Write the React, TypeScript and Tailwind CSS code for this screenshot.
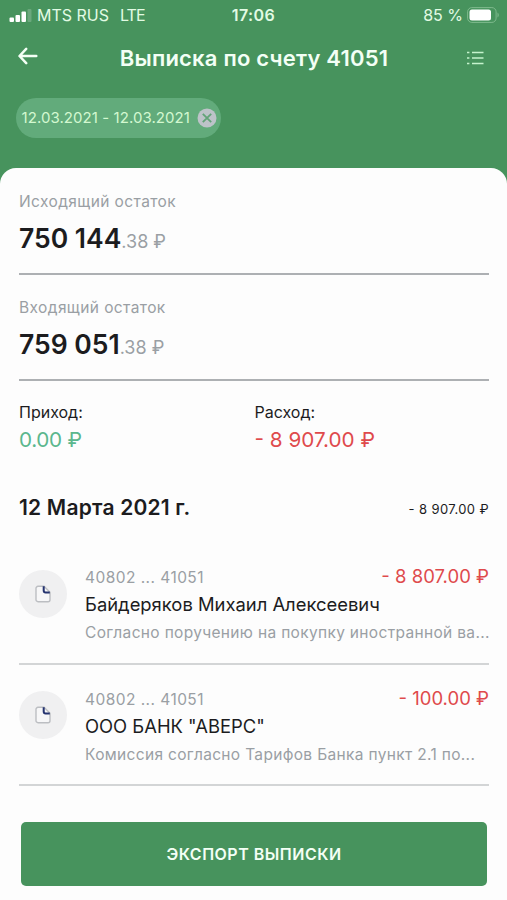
import React from "react";

interface BalanceProps {
  label: string;
  whole: string;
  cents: string;
}

interface OperationProps {
  account: string;
  amount: string;
  name: string;
  description: string;
}

const operations: OperationProps[] = [
  {
    account: "40802 ... 41051",
    amount: "- 8 807.00 ₽",
    name: "Байдеряков Михаил Алексеевич",
    description: "Согласно поручению на покупку иностранной ва...",
  },
  {
    account: "40802 ... 41051",
    amount: "- 100.00 ₽",
    name: 'ООО БАНК "АВЕРС"',
    description: "Комиссия согласно Тарифов Банка пункт 2.1 по...",
  },
];

const App: React.FC = () => {
  return (
    <div className="flex h-[900px] w-full flex-col overflow-hidden bg-[#47935d] font-['Inter','Liberation_Sans',sans-serif] text-[#1c1c1e]">
      <StatusBar />
      <header className="flex h-14 items-center justify-between pr-[23px] pl-[18px] text-[#f3fff5]">
        <svg width="20" height="18" viewBox="0 0 20 18" fill="none" stroke="currentColor" strokeWidth="2.5" strokeLinecap="round" strokeLinejoin="round" className="mb-1">
          <path d="M18.3 9H2M8.2 1.8 1.5 9l6.7 7.2" />
        </svg>
        <h1 className="ml-1 text-[22px] leading-7 font-semibold tracking-[0.2px]">
          Выписка по счету 41051
        </h1>
        <svg width="18" height="14" viewBox="0 0 18 14" stroke="#c5f3cd" strokeWidth="1.6">
          <path d="M6 1.5h11.5M6 7h11.5M6 12.5h11.5M1 1.5h2.4M1 7h2.4M1 12.5h2.4" />
        </svg>
      </header>
      <div className="h-[82px] px-4 pt-3">
        <div className="flex h-10 w-[205px] items-center justify-between rounded-full bg-[#62ab7b] pr-1 pl-[5.5px]">
          <span className="pt-px text-[15px] tracking-[0.07px] whitespace-nowrap text-[#d3f8d0]">
            12.03.2021 - 12.03.2021
          </span>
          <svg width="20" height="20" viewBox="0 0 20 20">
            <circle cx="10" cy="10" r="9.5" fill="#bdc3c9" />
            <path d="m5.8 5.8 8.4 8.4m0-8.4-8.4 8.4" stroke="#62a378" strokeWidth="1.8" />
          </svg>
        </div>
      </div>
      <main className="flex-1 rounded-t-2xl bg-[#fdfdfd] pt-px pr-[18px] pl-[19px]">
        <Balance label="Исходящий остаток" whole="750 144" cents=".38 ₽" />
        <Balance label="Входящий остаток" whole="759 051" cents=".38 ₽" />
        <div className="grid h-[89px] grid-cols-2 gap-x-px pt-[21px]">
          <Total label="Приход:" value="0.00 ₽" className="tracking-[-0.3px] text-[#5bb78d]" />
          <Total label="Расход:" value="- 8 907.00 ₽" className="text-[#df4a4c]" />
        </div>
        <div className="flex h-[73px] items-center justify-between pt-0.5">
          <h2 className="text-[21px] font-semibold tracking-[0.2px]">12 Марта 2021 г.</h2>
          <span className="pt-1 text-[13px] tracking-[0.4px]">- 8 907.00 ₽</span>
        </div>
        {operations.map((operation) => (
          <Operation key={operation.name} {...operation} />
        ))}
        <button className="mx-0.5 mt-9 flex h-16 w-[466px] items-center justify-center rounded-[5px] bg-[#47935d] text-base font-semibold tracking-[0.5px] text-[#f3fff5]">
          ЭКСПОРТ ВЫПИСКИ
        </button>
      </main>
    </div>
  );
};

const StatusBar: React.FC = () => {
  return (
    <div className="grid h-[30px] grid-cols-3 items-center px-2 text-base text-[#e2fbe4]">
      <div className="flex items-center whitespace-nowrap">
        <svg width="24" height="13" viewBox="0 0 24 13" fill="#fff">
          <rect x="1.5" y="8.5" width="4.5" height="4.5" rx="1" />
          <rect x="7.5" y="6" width="4.5" height="7" rx="1" />
          <rect x="13.5" y="2.5" width="4.5" height="10.5" rx="1" />
          <rect x="19.5" y="0" width="4" height="13" rx="1" opacity=".2" />
        </svg>
        <span className="ml-[5px]">MTS RUS</span>
        <span className="ml-[11px] tracking-[-0.9px]">LTE</span>
      </div>
      <span className="text-center font-semibold tracking-[0.4px]">17:06</span>
      <div className="flex items-center justify-end gap-1">
        <span>85 %</span>
        <svg width="32" height="16" viewBox="0 0 32 16" fill="none">
          <rect x=".6" y=".6" width="28.5" height="14.8" rx="4.2" stroke="#7fba8d" />
          <rect x="2.5" y="2.5" width="21.5" height="11" rx="2.5" fill="#fff" />
          <path d="M30.5 5.5c1.6.7 1.6 4.3 0 5Z" fill="#7fba8d" />
        </svg>
      </div>
    </div>
  );
};

const Balance: React.FC<BalanceProps> = (props) => {
  return (
    <section className="h-[106px] border-b-2 border-[#adb0b3] pt-[23px]">
      <p className="text-[15.5px] leading-5 tracking-[0.4px] text-[#9a9fa4]">
        {props.label}
      </p>
      <p className="mt-2.5 flex items-baseline leading-8">
        <span className="text-[26.5px] font-semibold">{props.whole}</span>
        <span className="text-[18px] text-[#9a9fa4]">{props.cents}</span>
      </p>
    </section>
  );
};

interface TotalProps {
  label: string;
  value: string;
  className: string;
}

const Total: React.FC<TotalProps> = (props) => {
  return (
    <div>
      <p className="text-base leading-5">{props.label}</p>
      <p className={`mt-1 text-[20.7px] leading-7 ${props.className}`}>
        {props.value}
      </p>
    </div>
  );
};

const Operation: React.FC<OperationProps> = (props) => {
  return (
    <article className="flex h-[121.5px] gap-[18px] border-b-2 border-[#d3d5d6] pt-[23px]">
      <div className="mt-[3.5px] flex size-12 shrink-0 items-center justify-center rounded-full bg-[#f0f0f1]">
        <svg width="16" height="18" viewBox="0 0 16 18" fill="none">
          <path d="M9 1.3H3a2 2 0 0 0-2 2v11.4a2 2 0 0 0 2 2h10a2 2 0 0 0 2-2V7.2L9 1.3Z" fill="#f7f7f8" stroke="#bcbec2" strokeWidth="1.4" />
          <path d="M8.7 1.3v4.2a1.9 1.9 0 0 0 1.9 1.900h4.200" stroke="#263470" strokeWidth="2" />
        </svg>
      </div>
      <div className="min-w-0 flex-1 whitespace-nowrap">
        <div className="flex h-5 items-start justify-between leading-5">
          <span className="pt-0.5 text-[15.5px] tracking-[0.45px] text-[#9a9fa4]">{props.account}</span>
          <span className="text-[18.5px] text-[#df4a4c]">{props.amount}</span>
        </div>
        <p className="mt-1.5 text-[18.4px] leading-6">{props.name}</p>
        <p className="mt-[7px] text-[15.5px] leading-5 tracking-[0.33px] text-[#9a9fa4]">
          {props.description}
        </p>
      </div>
    </article>
  );
};

export default App;
